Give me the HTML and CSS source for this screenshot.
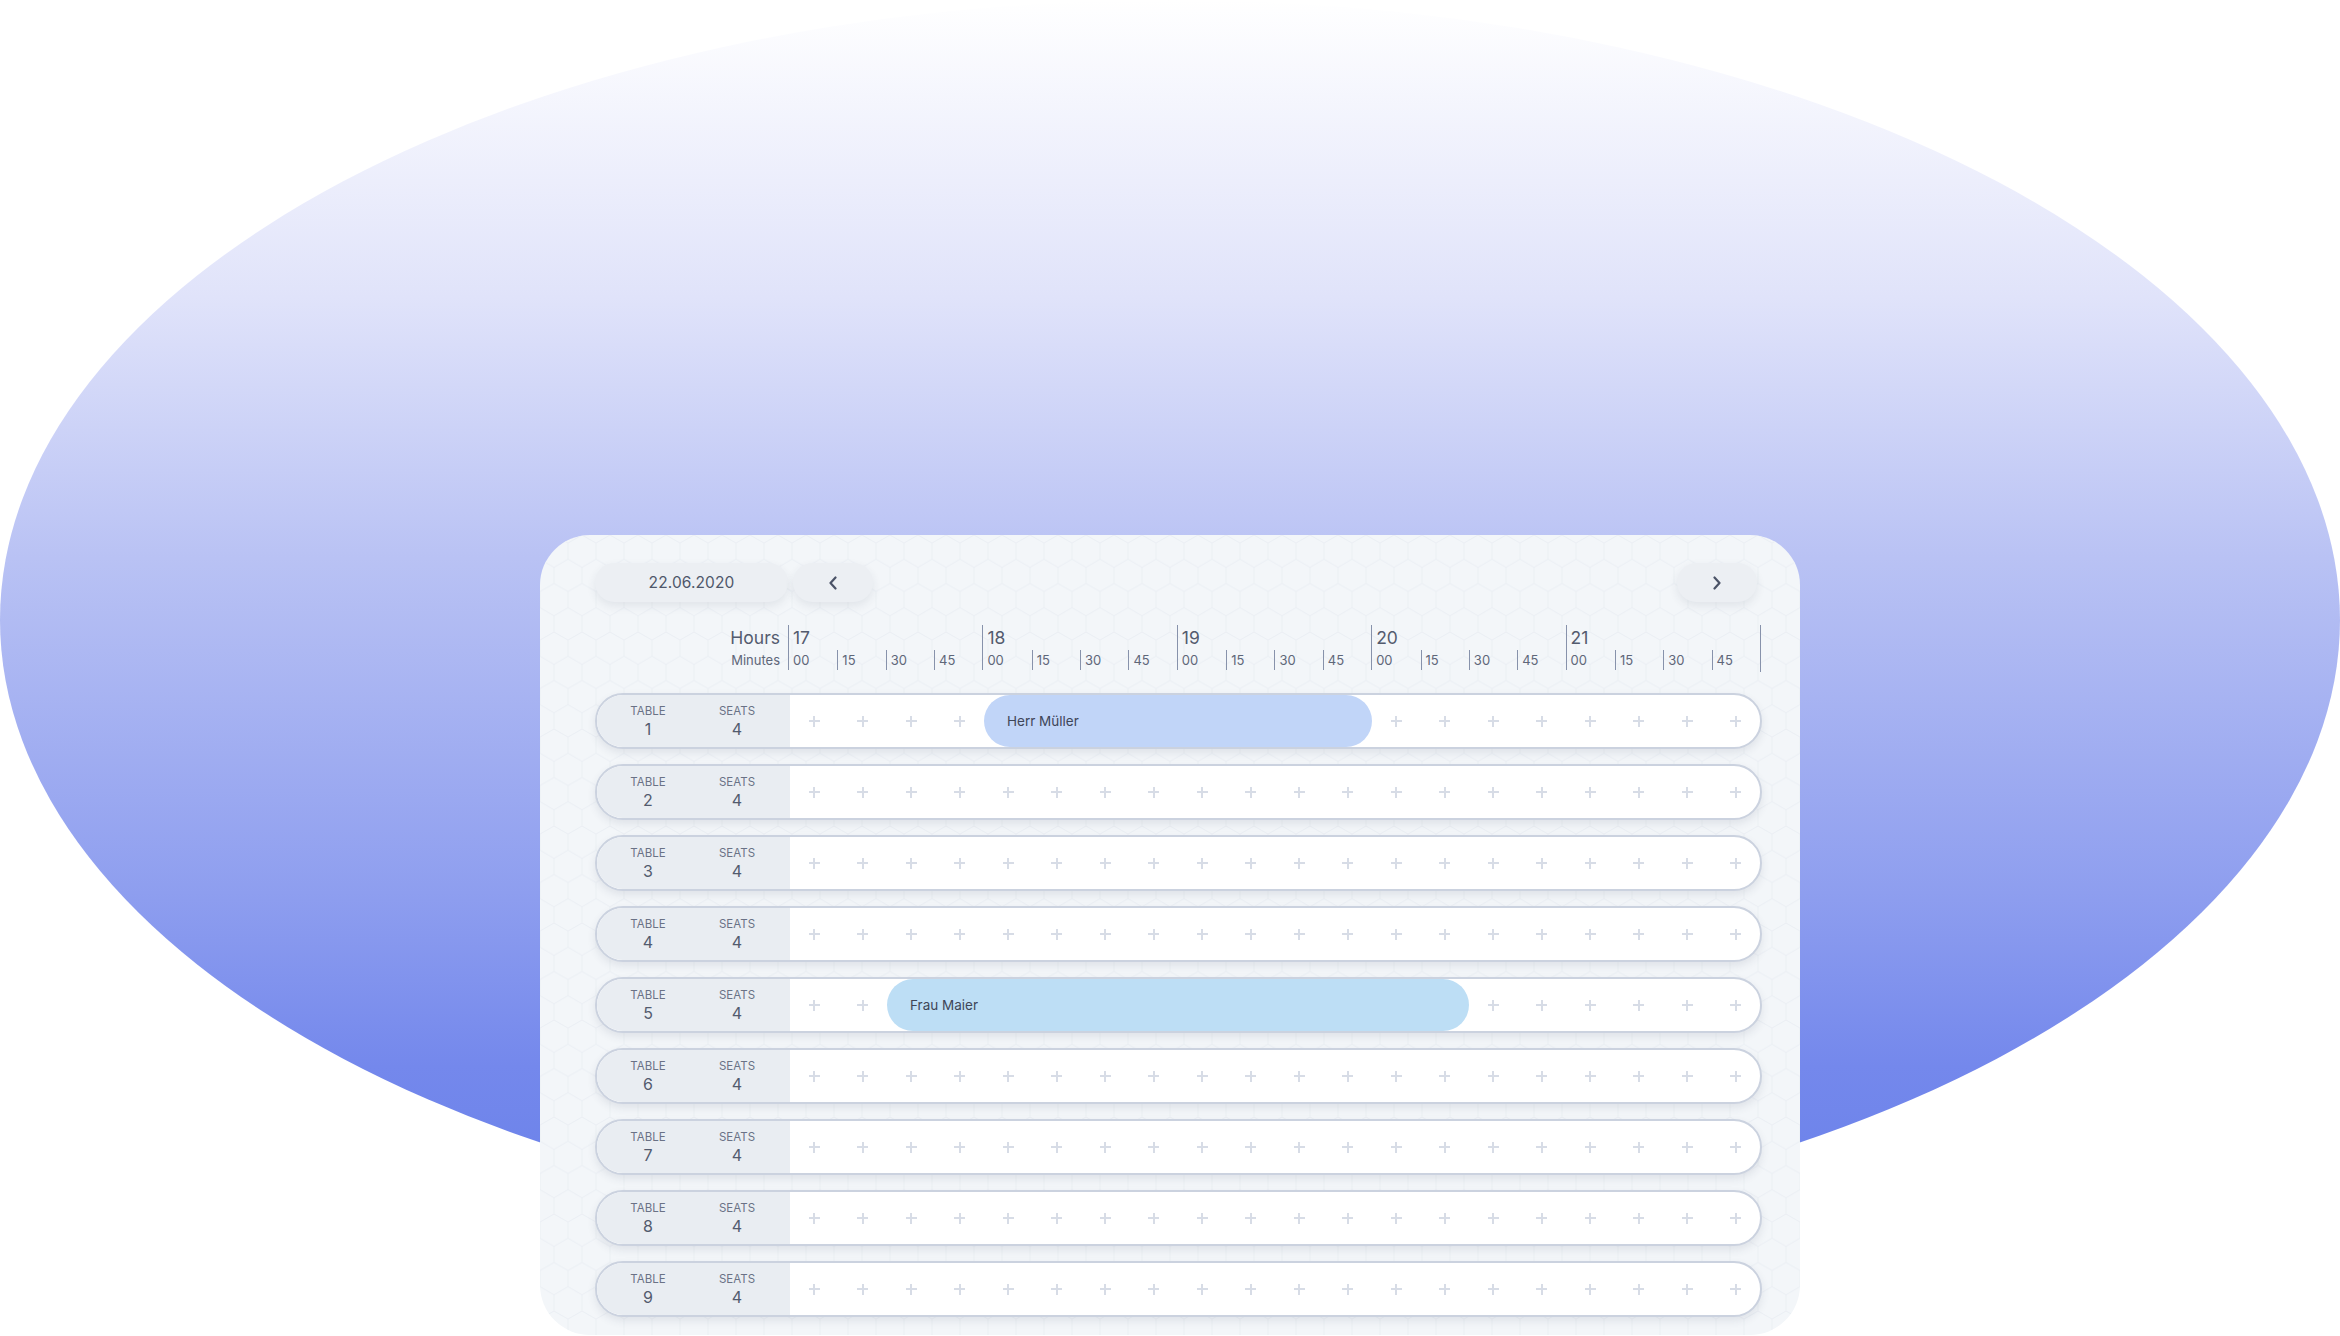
FILE: index.html
```html
<!DOCTYPE html>
<html lang="de">
<head>
<meta charset="utf-8">
<title>Reservierungen</title>
<link rel="stylesheet" href="styles.css">
</head>
<body>
<div class="blob"></div>
<main class="card">
  <svg class="hex" width="100%" height="100%" aria-hidden="true">
    <defs>
      <pattern id="hx" width="28" height="48.5" patternUnits="userSpaceOnUse">
        <path d="M14 0 L28 8.08 L28 24.25 L14 32.33 L0 24.25 L0 8.08 Z M14 32.33 L14 48.5" fill="none" stroke="#ebeff4" stroke-width="1"/>
      </pattern>
    </defs>
    <rect width="100%" height="100%" fill="url(#hx)"/>
  </svg>
  <div class="content">
    <div class="toolbar">
      <button class="pill date">22.06.2020</button>
      <button class="pill nav" aria-label="zurück"><svg width="10" height="14" viewBox="0 0 10 14"><polyline points="7.5,1.5 2.5,7 7.5,12.5" fill="none" stroke="#4b5367" stroke-width="2.2" stroke-linecap="round" stroke-linejoin="round"/></svg></button>
      <button class="pill nav next" aria-label="weiter"><svg width="10" height="14" viewBox="0 0 10 14"><polyline points="2.5,1.5 7.5,7 2.5,12.5" fill="none" stroke="#4b5367" stroke-width="2.2" stroke-linecap="round" stroke-linejoin="round"/></svg></button>
    </div>

    <div class="scale">
      <div class="scale-label"><span class="lh">Hours</span><span class="lm">Minutes</span></div>
      <div class="hour"><span class="hnum">17</span><div class="mins"><span class="q">00</span><span class="q tick">15</span><span class="q tick">30</span><span class="q tick">45</span></div></div>
      <div class="hour"><span class="hnum">18</span><div class="mins"><span class="q">00</span><span class="q tick">15</span><span class="q tick">30</span><span class="q tick">45</span></div></div>
      <div class="hour"><span class="hnum">19</span><div class="mins"><span class="q">00</span><span class="q tick">15</span><span class="q tick">30</span><span class="q tick">45</span></div></div>
      <div class="hour"><span class="hnum">20</span><div class="mins"><span class="q">00</span><span class="q tick">15</span><span class="q tick">30</span><span class="q tick">45</span></div></div>
      <div class="hour"><span class="hnum">21</span><div class="mins"><span class="q">00</span><span class="q tick">15</span><span class="q tick">30</span><span class="q tick">45</span></div></div>
      <div class="scale-end"></div>
    </div>

    <div class="rows">
      <div class="row">
        <div class="meta"><div class="col c1"><span class="k">Table</span><span class="v">1</span></div><div class="col c2"><span class="k">Seats</span><span class="v">4</span></div></div>
        <div class="slots">
          <div class="booking blue" style="grid-column: 5 / 13">Herr Müller</div>
          <span class="slot"></span><span class="slot"></span><span class="slot"></span><span class="slot"></span><span class="slot"></span><span class="slot"></span><span class="slot"></span><span class="slot"></span><span class="slot"></span><span class="slot"></span><span class="slot"></span><span class="slot"></span>
        </div>
      </div>
      <div class="row">
        <div class="meta"><div class="col c1"><span class="k">Table</span><span class="v">2</span></div><div class="col c2"><span class="k">Seats</span><span class="v">4</span></div></div>
        <div class="slots">
          <span class="slot"></span><span class="slot"></span><span class="slot"></span><span class="slot"></span><span class="slot"></span><span class="slot"></span><span class="slot"></span><span class="slot"></span><span class="slot"></span><span class="slot"></span><span class="slot"></span><span class="slot"></span><span class="slot"></span><span class="slot"></span><span class="slot"></span><span class="slot"></span><span class="slot"></span><span class="slot"></span><span class="slot"></span><span class="slot"></span>
        </div>
      </div>
      <div class="row">
        <div class="meta"><div class="col c1"><span class="k">Table</span><span class="v">3</span></div><div class="col c2"><span class="k">Seats</span><span class="v">4</span></div></div>
        <div class="slots">
          <span class="slot"></span><span class="slot"></span><span class="slot"></span><span class="slot"></span><span class="slot"></span><span class="slot"></span><span class="slot"></span><span class="slot"></span><span class="slot"></span><span class="slot"></span><span class="slot"></span><span class="slot"></span><span class="slot"></span><span class="slot"></span><span class="slot"></span><span class="slot"></span><span class="slot"></span><span class="slot"></span><span class="slot"></span><span class="slot"></span>
        </div>
      </div>
      <div class="row">
        <div class="meta"><div class="col c1"><span class="k">Table</span><span class="v">4</span></div><div class="col c2"><span class="k">Seats</span><span class="v">4</span></div></div>
        <div class="slots">
          <span class="slot"></span><span class="slot"></span><span class="slot"></span><span class="slot"></span><span class="slot"></span><span class="slot"></span><span class="slot"></span><span class="slot"></span><span class="slot"></span><span class="slot"></span><span class="slot"></span><span class="slot"></span><span class="slot"></span><span class="slot"></span><span class="slot"></span><span class="slot"></span><span class="slot"></span><span class="slot"></span><span class="slot"></span><span class="slot"></span>
        </div>
      </div>
      <div class="row">
        <div class="meta"><div class="col c1"><span class="k">Table</span><span class="v">5</span></div><div class="col c2"><span class="k">Seats</span><span class="v">4</span></div></div>
        <div class="slots">
          <div class="booking sky" style="grid-column: 3 / 15">Frau Maier</div>
          <span class="slot"></span><span class="slot"></span><span class="slot"></span><span class="slot"></span><span class="slot"></span><span class="slot"></span><span class="slot"></span><span class="slot"></span>
        </div>
      </div>
      <div class="row">
        <div class="meta"><div class="col c1"><span class="k">Table</span><span class="v">6</span></div><div class="col c2"><span class="k">Seats</span><span class="v">4</span></div></div>
        <div class="slots">
          <span class="slot"></span><span class="slot"></span><span class="slot"></span><span class="slot"></span><span class="slot"></span><span class="slot"></span><span class="slot"></span><span class="slot"></span><span class="slot"></span><span class="slot"></span><span class="slot"></span><span class="slot"></span><span class="slot"></span><span class="slot"></span><span class="slot"></span><span class="slot"></span><span class="slot"></span><span class="slot"></span><span class="slot"></span><span class="slot"></span>
        </div>
      </div>
      <div class="row">
        <div class="meta"><div class="col c1"><span class="k">Table</span><span class="v">7</span></div><div class="col c2"><span class="k">Seats</span><span class="v">4</span></div></div>
        <div class="slots">
          <span class="slot"></span><span class="slot"></span><span class="slot"></span><span class="slot"></span><span class="slot"></span><span class="slot"></span><span class="slot"></span><span class="slot"></span><span class="slot"></span><span class="slot"></span><span class="slot"></span><span class="slot"></span><span class="slot"></span><span class="slot"></span><span class="slot"></span><span class="slot"></span><span class="slot"></span><span class="slot"></span><span class="slot"></span><span class="slot"></span>
        </div>
      </div>
      <div class="row">
        <div class="meta"><div class="col c1"><span class="k">Table</span><span class="v">8</span></div><div class="col c2"><span class="k">Seats</span><span class="v">4</span></div></div>
        <div class="slots">
          <span class="slot"></span><span class="slot"></span><span class="slot"></span><span class="slot"></span><span class="slot"></span><span class="slot"></span><span class="slot"></span><span class="slot"></span><span class="slot"></span><span class="slot"></span><span class="slot"></span><span class="slot"></span><span class="slot"></span><span class="slot"></span><span class="slot"></span><span class="slot"></span><span class="slot"></span><span class="slot"></span><span class="slot"></span><span class="slot"></span>
        </div>
      </div>
      <div class="row">
        <div class="meta"><div class="col c1"><span class="k">Table</span><span class="v">9</span></div><div class="col c2"><span class="k">Seats</span><span class="v">4</span></div></div>
        <div class="slots">
          <span class="slot"></span><span class="slot"></span><span class="slot"></span><span class="slot"></span><span class="slot"></span><span class="slot"></span><span class="slot"></span><span class="slot"></span><span class="slot"></span><span class="slot"></span><span class="slot"></span><span class="slot"></span><span class="slot"></span><span class="slot"></span><span class="slot"></span><span class="slot"></span><span class="slot"></span><span class="slot"></span><span class="slot"></span><span class="slot"></span>
        </div>
      </div>
    </div>
  </div>
</main>
</body>
</html>
```

FILE: styles.css
```css
* { box-sizing: border-box; }

html, body {
  margin: 0;
  padding: 0;
}

body {
  position: relative;
  width: 2340px;
  height: 1336px;
  overflow: hidden;
  background: #ffffff;
  font-family: "Inter", "Roboto", "Liberation Sans", sans-serif;
  color: #535b6e;
}

.blob {
  position: absolute;
  left: 0;
  top: 0;
  width: 2340px;
  height: 1240px;
  border-radius: 50%;
  background: linear-gradient(180deg,
    #ffffff 0%,
    #e0e3fa 24%,
    #b9c2f4 45%,
    #8e9eef 72%,
    #7488ec 86%,
    #6880e9 100%);
}

.card {
  position: relative;
  width: 1260px;
  height: 800px;
  margin: 535px auto 0;
  border-radius: 50px;
  background: #f3f6f9;
  overflow: hidden;
}

.hex {
  position: absolute;
  inset: 0;
}

.content {
  position: relative;
  padding: 28px 38px 0 55px;
}

/* toolbar */
.toolbar {
  display: flex;
  align-items: center;
  padding-right: 5px;
}

.pill {
  height: 39px;
  border: 0;
  border-radius: 20px;
  background: #eceff3;
  box-shadow: 0 4px 10px rgba(40, 50, 80, 0.09);
  font-family: inherit;
  color: #4f576a;
  display: flex;
  align-items: center;
  justify-content: center;
  padding: 0;
}

.date {
  width: 193px;
  font-size: 15.5px;
  letter-spacing: 0.1px;
}

.nav {
  width: 80px;
  margin-left: 5px;
}

.nav.next {
  margin-left: auto;
}

/* time scale */
.scale {
  display: flex;
  align-items: flex-start;
  margin-top: 23px;
  height: 47px;
}

.scale-label {
  width: 193px;
  display: flex;
  flex-direction: column;
  align-items: flex-end;
  padding-right: 8px;
}

.lh {
  font-size: 17.5px;
  line-height: 25px;
  color: #535b6e;
}

.lm {
  font-size: 13px;
  line-height: 20px;
  color: #5f6779;
}

.hour {
  width: 194.4px;
  height: 45px;
  border-left: 1px solid #8792ab;
  display: flex;
  flex-direction: column;
}

.hnum {
  font-size: 17.5px;
  line-height: 25px;
  padding-left: 4px;
  color: #535b6e;
}

.mins {
  display: flex;
  height: 20px;
}

.q {
  width: 48.6px;
  font-size: 13px;
  line-height: 20px;
  padding-left: 4px;
  color: #5f6779;
}

.q.tick {
  border-left: 1px solid #8792ab;
}

.scale-end {
  width: 1px;
  height: 47px;
  border-left: 1px solid #8792ab;
}

/* rows */
.rows {
  margin-top: 21px;
  display: flex;
  flex-direction: column;
  gap: 15px;
}

.row {
  width: 1167px;
  height: 56px;
  display: flex;
  border: 2px solid #cbd2df;
  border-radius: 28px;
  overflow: hidden;
  background: #ffffff;
  box-shadow: 0 4px 8px rgba(50, 60, 90, 0.10);
}

.meta {
  width: 193px;
  flex: none;
  display: flex;
  padding-left: 7px;
  background: #e9edf2;
}

.col {
  display: flex;
  flex-direction: column;
  align-items: center;
  justify-content: center;
  gap: 2px;
}

.c1 { width: 88px; }
.c2 { width: 90px; }

.k {
  font-size: 11.5px;
  line-height: 14px;
  text-transform: uppercase;
  color: #6a7286;
}

.v {
  font-size: 16px;
  line-height: 18px;
  color: #535b6e;
}

.slots {
  display: grid;
  grid-template-columns: repeat(20, 48.5px);
  grid-template-rows: 52px;
}

.slot {
  grid-row: 1;
  position: relative;
}

.slot::before,
.slot::after {
  content: "";
  position: absolute;
  left: 50%;
  top: 50%;
  background: #d7dce6;
}

.slot::before {
  width: 11px;
  height: 2px;
  margin: -1px 0 0 -5.5px;
}

.slot::after {
  width: 2px;
  height: 11px;
  margin: -5.5px 0 0 -1px;
}

.booking {
  grid-row: 1;
  border-radius: 26px;
  display: flex;
  align-items: center;
  padding-left: 23px;
  font-size: 13.5px;
  color: #3f4658;
}

.booking.blue { background: #c1d5f8; }
.booking.sky { background: #bddef5; }
```
